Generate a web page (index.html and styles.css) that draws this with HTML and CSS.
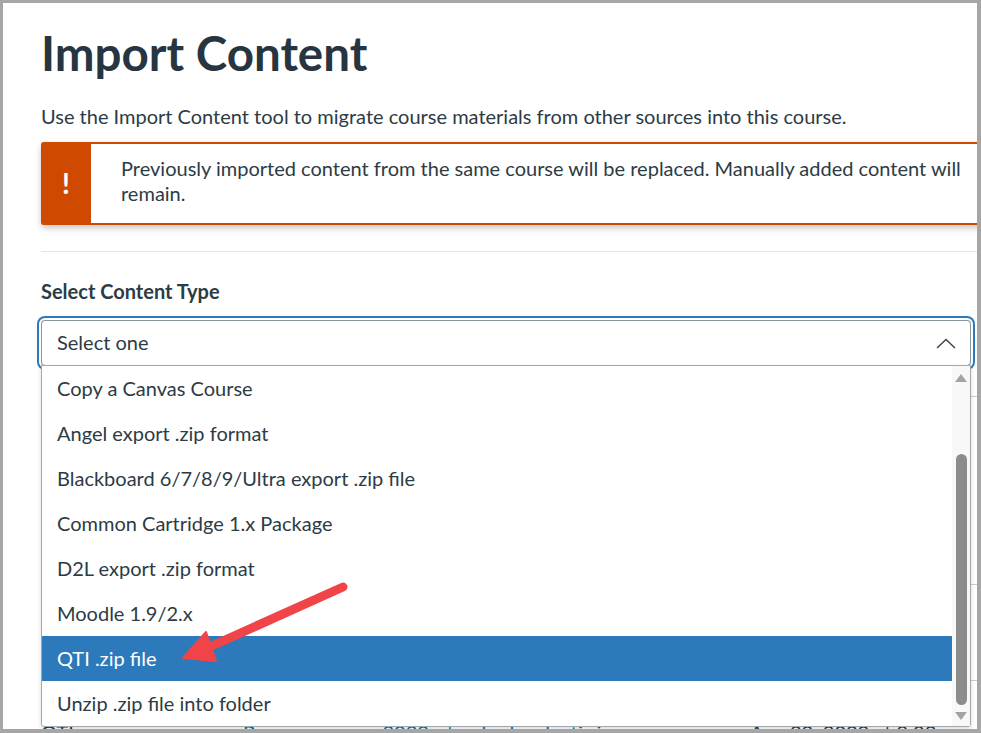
FILE: index.html
```html
<!DOCTYPE html>
<html lang="en">
<head>
<meta charset="utf-8">
<title>Import Content</title>
<link rel="stylesheet" href="styles.css">
</head>
<body>
<div class="shot">
  <div class="frame">
    <main class="page">
      <h1 class="title">Import Content</h1>
      <p class="intro">Use the Import Content tool to migrate course materials from other sources into this course.</p>
      <div class="alert">
        <div class="alert-icon">!</div>
        <div class="alert-text">Previously imported content from the same course will be replaced. Manually added content will remain.</div>
      </div>
      <hr class="rule">
      <div class="field">
        <label class="field-label">Select Content Type</label>
        <div class="select-wrap">
          <div class="select">
            <span>Select one</span>
            <svg class="chev" width="20" height="11" viewBox="0 0 20 11"><path d="M1 10 L10 1.5 L19 10" fill="none" stroke="#3d464d" stroke-width="1.5"/></svg>
          </div>
          <div class="listbox">
            <ul class="options">
              <li>Copy a Canvas Course</li>
              <li>Angel export .zip format</li>
              <li>Blackboard 6/7/8/9/Ultra export .zip file</li>
              <li>Common Cartridge 1.x Package</li>
              <li>D2L export .zip format</li>
              <li>Moodle 1.9/2.x</li>
              <li class="active">QTI .zip file</li>
              <li>Unzip .zip file into folder</li>
            </ul>
            <div class="scrollbar">
              <span class="arr up"></span>
              <span class="track"><span class="thumb"></span></span>
              <span class="arr down"></span>
            </div>
          </div>
        </div>
      </div>
      <div class="behind">
        <div class="row r1"></div>
        <div class="row r2"></div>
        <div class="row r3">
          <span class="c1">QTI</span>
          <span class="c2">Resources_ccun2023_standard.xml_qti.zip</span>
          <span class="c3">Aug 22, 2023 at 9:03am</span>
        </div>
      </div>
    </main>
  </div>
  <svg class="annot" width="981" height="733" viewBox="0 0 981 733">
    <line x1="343" y1="587" x2="205" y2="649" stroke="#f04449" stroke-width="9" stroke-linecap="round"/>
    <polygon points="183,658 206,632 216,661" fill="#f04449" stroke="#f04449" stroke-width="2" stroke-linejoin="round"/>
  </svg>
</div>
</body>
</html>
```

FILE: styles.css
```css
* { box-sizing: border-box; }
html, body { margin: 0; padding: 0; background: #fff; }
body { font-family: Lato, "Noto Sans", sans-serif; color: #2d3b45; }

.shot { position: relative; width: 981px; height: 733px; }

.frame {
  width: 981px;
  height: 733px;
  border-style: solid;
  border-color: #a6a6a6;
  border-width: 3px 4px 4px 3px;
  overflow: hidden;
  background: #fff;
}

.page {
  padding-left: 38px;
  width: 1000px;
}

.title {
  margin: 21px 0 20px;
  font-size: 47.5px;
  line-height: 57.6px;
  font-weight: 700;
  color: #273540;
}

.intro {
  margin: 0;
  font-size: 20px;
  line-height: 28px;
}

.alert {
  margin-top: 12px;
  width: 950px;
  display: flex;
  border: 2px solid #cf4a00;
  border-radius: 4px;
  box-shadow: 0 3px 6px rgba(0,0,0,0.22);
  background: #fff;
}
.alert-icon {
  flex: none;
  width: 50px;
  margin: -2px 0 -2px -2px;
  background: #cf4a00;
  border-radius: 3px 0 0 3px;
  color: #fff;
  font-weight: 700;
  font-size: 28px;
  display: flex;
  align-items: center;
  justify-content: center;
}
.alert-text {
  padding: 12px 20px 17px 30px;
  font-size: 20px;
  line-height: 25px;
}

.rule {
  margin: 26px 0 0;
  border: 0;
  border-top: 1px solid #e3e5e7;
}

.field { margin-top: 27px; }
.field-label {
  display: block;
  font-size: 20px;
  line-height: 25px;
  font-weight: 700;
}

.select-wrap {
  position: relative;
  margin-top: 16px;
  width: 930px;
}
.select {
  height: 46px;
  border: 1px solid #8a949b;
  border-radius: 4px;
  box-shadow: 0 0 0 2px #fff, 0 0 0 4px #2b7abc;
  display: flex;
  align-items: center;
  justify-content: space-between;
  padding: 0 14px 0 15px;
  font-size: 20px;
  line-height: 25px;
}
.chev { display: block; margin-top: 1px; }

.listbox {
  position: absolute;
  left: 0;
  top: 45px;
  width: 930px;
  height: 362px;
  border: 1px solid #a3a8ad;
  border-radius: 0 0 3px 3px;
  background: #fff;
  display: flex;
  box-shadow: 0 2px 4px rgba(0,0,0,0.15);
  z-index: 2;
}
.options {
  list-style: none;
  margin: 0;
  padding: 0;
  width: 910px;
}
.options li {
  height: 45px;
  display: flex;
  align-items: center;
  padding-left: 15px;
  font-size: 20px;
  line-height: 25px;
}
.options li.active { background: #2c7abb; color: #fff; }

.scrollbar {
  width: 18px;
  background: #f8f8f8;
  display: flex;
  flex-direction: column;
  align-items: center;
  padding: 8px 0 6px;
}
.arr {
  width: 0; height: 0;
  border-left: 6px solid transparent;
  border-right: 6px solid transparent;
}
.arr.up { border-bottom: 8px solid #a3a3a3; }
.arr.down { border-top: 8px solid #a3a3a3; }
.track {
  flex: 1;
  display: flex;
  flex-direction: column;
  justify-content: flex-end;
  padding: 0 0 7px;
}
.thumb {
  width: 11px;
  height: 251px;
  background: #8c8c8c;
  border-radius: 6px;
}

.behind {
  margin-top: 30px;
  width: 940px;
}
.row { border-top: 1px solid #c7cdd1; }
.r1 { height: 188px; }
.r2 { height: 96px; }
.r3 {
  padding-top: 39px;
  display: flex;
  font-size: 20px;
  line-height: 25px;
}
.c1 { width: 202px; }
.c2 { width: 507px; color: #0770a3; }

.annot { position: absolute; left: 0; top: 0; pointer-events: none; z-index: 5; }
```
